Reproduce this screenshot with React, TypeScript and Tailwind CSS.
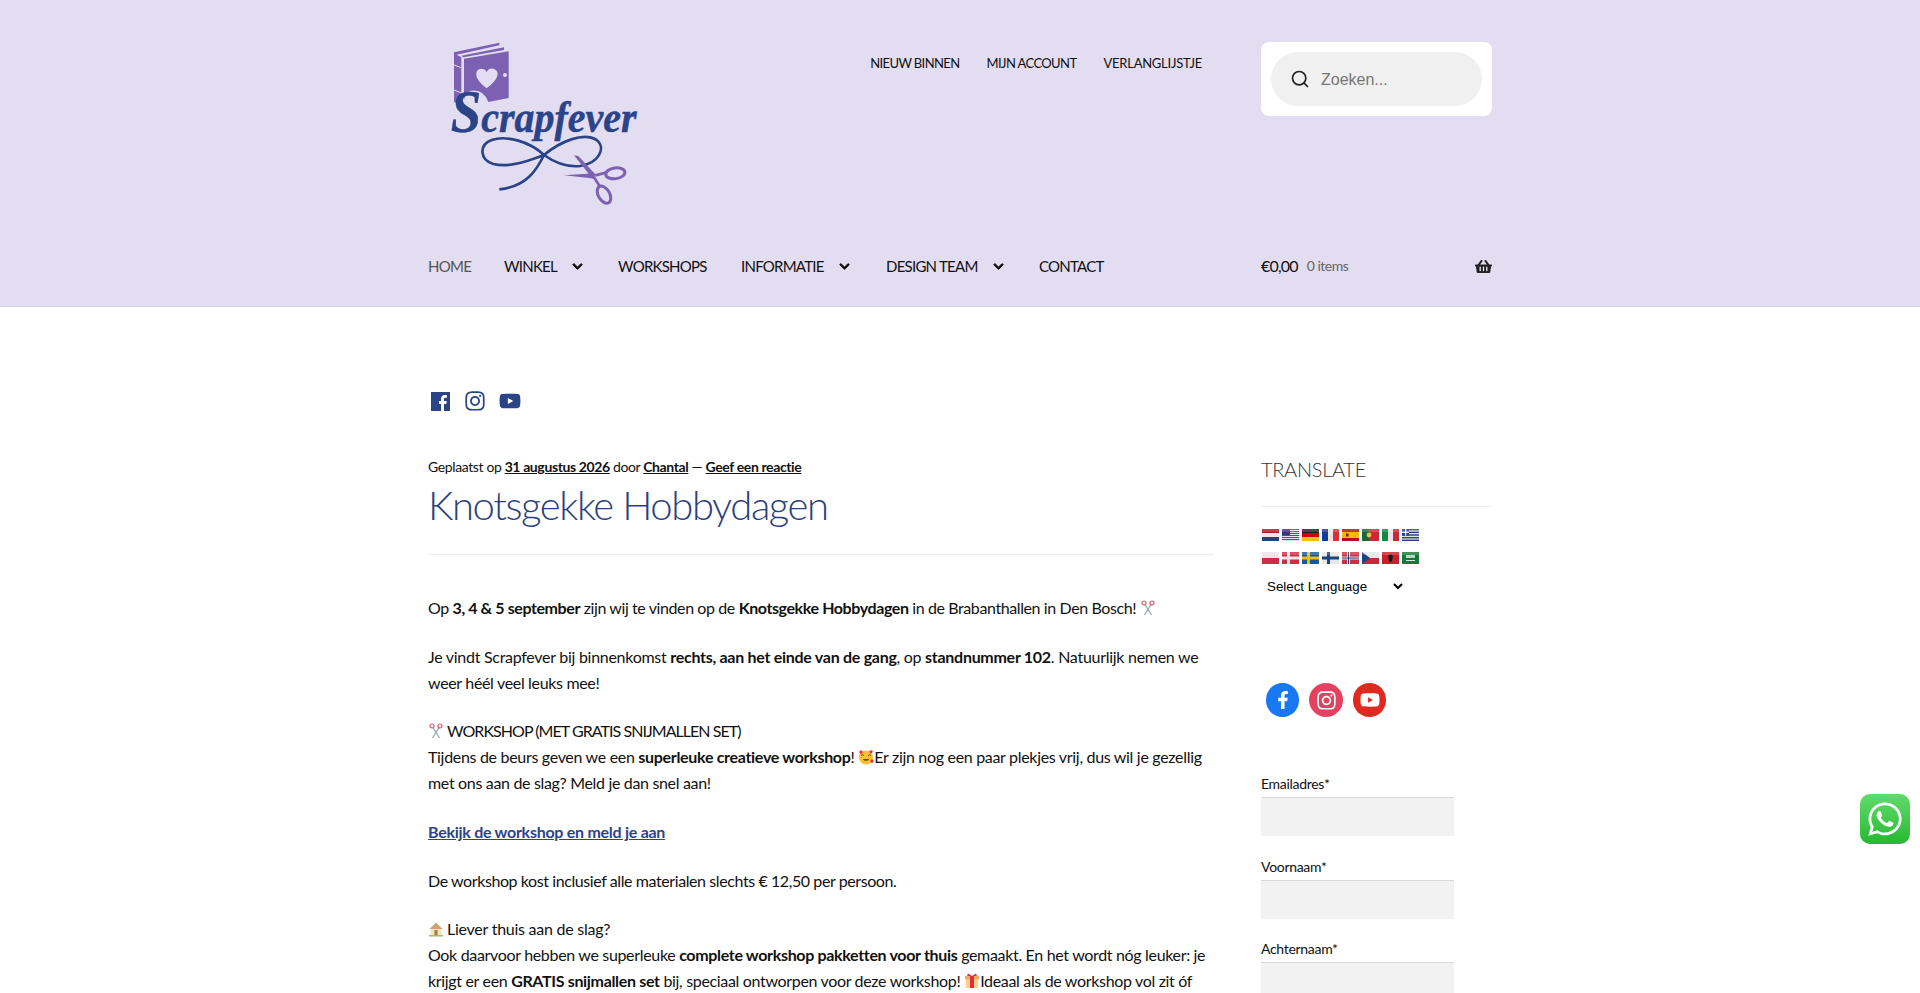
import React from "react";
import { FaFacebookF, FaInstagram, FaYoutube, FaWhatsapp, FaChevronDown, FaShoppingBasket } from "react-icons/fa";
import { Search } from "lucide-react";

const Scissors = () => (
  <svg viewBox="0 0 16 16" className="inline-block w-4 h-4 align-[-2px] mr-[3px]">
    <path d="M5 4.5 L11.5 15 M11 4.5 L4.5 15" stroke="#99aab5" strokeWidth="1.4" fill="none" />
    <circle cx="4" cy="3" r="2" fill="none" stroke="#dd5566" strokeWidth="1.2" />
    <circle cx="12" cy="3" r="2" fill="none" stroke="#dd5566" strokeWidth="1.2" />
  </svg>
);
const House = () => (
  <svg viewBox="0 0 16 16" className="inline-block w-4 h-4 align-[-2px] mr-[3px]">
    <rect x="3" y="7" width="10" height="7" fill="#f3e3b0" />
    <path d="M1.5 8 L8 1.5 L14.5 8 Z" fill="#c9a670" />
    <rect x="6.5" y="9" width="3" height="5" fill="#9b7b52" />
    <rect x="1" y="14" width="14" height="1.5" fill="#8fc46a" />
  </svg>
);
const Gift = () => (
  <svg viewBox="0 0 16 16" className="inline-block w-4 h-4 align-[-2px]">
    <rect x="2" y="6" width="12" height="9" rx="1" fill="#fbd27e" />
    <rect x="1" y="3" width="14" height="3.5" fill="#f3a85c" />
    <rect x="6" y="3" width="4" height="12" fill="#dd2e44" />
    <path d="M8 3 L4 0.5 L3 3 Z M8 3 L12 0.5 L13 3 Z" fill="#dd2e44" />
  </svg>
);
const Face = () => (
  <svg viewBox="0 0 16 16" className="inline-block w-4 h-4 align-[-2px]">
    <circle cx="8" cy="8.5" r="7" fill="#fbc02d" />
    <path d="M4.5 10 Q8 14 11.5 10 Z" fill="#7a4a20" />
    <path d="M3 6.5 Q4.5 5 6 6.5 M10 6.5 Q11.5 5 13 6.5" stroke="#7a4a20" strokeWidth="1" fill="none" />
    <path d="M1 3 L3 1 L5 3 L3 5.5 Z M12 12 L14 10 L16 12 L14 14.5 Z M11 2.5 L13 1 L15 2.5 L13 5 Z" fill="#e8353f" />
  </svg>
);

const Flag = ({ children }: { children: React.ReactNode }) => (
  <svg viewBox="0 0 17 12" className="w-[17px] h-[12px] block">
    {children}
    <rect width="17" height="12" fill="#000" opacity="0.05" />
    <rect width="17" height="3" fill="#fff" opacity="0.18" />
  </svg>
);
const H = (a: string, b: string, c: string) => (
  <>
    <rect width="17" height="4" fill={a} />
    <rect y="4" width="17" height="4" fill={b} />
    <rect y="8" width="17" height="4" fill={c} />
  </>
);
const V = (a: string, b: string, c: string) => (
  <>
    <rect width="6" height="12" fill={a} />
    <rect x="6" width="5" height="12" fill={b} />
    <rect x="11" width="6" height="12" fill={c} />
  </>
);
const Nordic = (bg: string, c: string, inner?: string) => (
  <>
    <rect width="17" height="12" fill={bg} />
    <rect x="5" width="3" height="12" fill={c} />
    <rect y="4.5" width="17" height="3" fill={c} />
    {inner && <rect x="6" width="1" height="12" fill={inner} />}
    {inner && <rect y="5.5" width="17" height="1" fill={inner} />}
  </>
);
const row1 = [
  H("#ae1c28", "#f4f4f4", "#21468b"),
  <>
    <rect width="17" height="12" fill="#f2f2f2" />
    {[0, 2, 4, 6, 8, 10].map((y) => <rect key={y} y={y} width="17" height="1" fill="#c8283c" />)}
    <rect width="8" height="6" fill="#3c3b6e" />
  </>,
  H("#222", "#d00", "#ffce00"),
  V("#1c3f94", "#f4f4f4", "#e1343f"),
  <>
    <rect width="17" height="12" fill="#c60b1e" />
    <rect y="3" width="17" height="6" fill="#ffc400" />
    <rect x="4" y="4.5" width="2.5" height="3" fill="#ad1519" />
  </>,
  <>
    <rect width="7" height="12" fill="#1f6b3a" />
    <rect x="7" width="10" height="12" fill="#d92b3a" />
    <circle cx="7" cy="6" r="2.4" fill="#f4d03f" />
  </>,
  V("#1a8f4a", "#f4f4f4", "#d62b38"),
  <>
    <rect width="17" height="12" fill="#f2f2f2" />
    {[0, 2.6, 5.3, 8, 10.6].map((y) => <rect key={y} y={y} width="17" height="1.4" fill="#2d3f93" />)}
    <rect width="7" height="6.5" fill="#2d3f93" />
    <rect x="3" width="1.3" height="6.5" fill="#fff" />
    <rect y="2.6" width="7" height="1.3" fill="#fff" />
  </>,
];
const row2 = [
  <>
    <rect width="17" height="6" fill="#f4f4f4" />
    <rect y="6" width="17" height="6" fill="#d9304a" />
  </>,
  Nordic("#d8324a", "#f4f4f4"),
  Nordic("#1b5f9e", "#fcc917"),
  Nordic("#f4f4f4", "#1d4a86"),
  Nordic("#d8324a", "#f4f4f4", "#22407f"),
  <>
    <rect width="17" height="6" fill="#f4f4f4" />
    <rect y="6" width="17" height="6" fill="#d7263d" />
    <path d="M0 0 L8 6 L0 12 Z" fill="#1d4a86" />
  </>,
  <>
    <rect width="17" height="12" fill="#d3222e" />
    <path d="M8.5 2 L11 4 L10 9 L8.5 10.5 L7 9 L6 4 Z" fill="#1b1b1b" />
  </>,
  <>
    <rect width="17" height="12" fill="#16813f" />
    <rect x="4" y="3" width="9" height="3" fill="#bfe3c8" />
    <rect x="4" y="8" width="9" height="1" fill="#e6f3e9" />
  </>,
];

const Logo = () => (
  <svg viewBox="0 0 780 600" className="w-[260px] h-[200px] block">
    <g fill="#7c61b2">
      <path d="M102 97 L238 68 L238 76 L110 104 L124 112 L124 255 L102 246 Z" />
      <path d="M132 116 L266 94 L266 234 L205 246 Q190 205 150 213 Q135 220 132 240 Z" />
      <path d="M124 107 L252 82 L252 90 L130 112 Z" />
    </g>
    <path d="M200 205 C175 185 165 170 170 155 C176 143 193 143 200 156 C207 141 226 143 232 156 C236 172 222 188 200 205 Z" fill="#e2ddf1" />
    <circle cx="255" cy="165" r="6" fill="#e2ddf1" />
    <path d="M102 135 L124 143 M102 210 L124 219" stroke="#e2ddf1" strokeWidth="3" />
    <text x="92" y="335" fill="#2b4488" stroke="#2b4488" strokeWidth="1.5" fontFamily="'Liberation Serif', serif" fontStyle="italic" fontWeight="700" fontSize="135" textLength="558" lengthAdjust="spacingAndGlyphs">
      <tspan fontSize="185">S</tspan>crapfever
    </text>
    <path d="M238 508 C320 500 350 450 372 405 C330 365 260 345 215 360 C175 375 180 420 220 432 C270 445 330 420 372 405 C420 365 490 335 530 360 C560 385 535 430 480 438 C440 442 400 425 372 405" fill="none" stroke="#2b4488" strokeWidth="8" />
    <g fill="#7c61b2">
      <path d="M462 406 L475 408 L528 465 L518 476 Z" />
      <path d="M432 466 L522 460 L526 476 Z" />
    </g>
    <ellipse cx="586" cy="460" rx="29" ry="16" fill="none" stroke="#7c61b2" strokeWidth="9" transform="rotate(-8 586 460)" />
    <ellipse cx="552" cy="524" rx="17" ry="28" fill="none" stroke="#7c61b2" strokeWidth="9" transform="rotate(-30 552 524)" />
    <path d="M526 466 L558 458 M522 472 L540 500" stroke="#7c61b2" strokeWidth="8" />
  </svg>
);

const NavItem = ({ label, chevron, className }: { label: string; chevron?: boolean; className?: string }) => (
  <a className={`flex items-center text-[15px] tracking-[-0.75px] text-[#111] ${className ?? ""}`}>
    {label}
    {chevron && <FaChevronDown className="text-[11px] ml-[15px] stroke-current stroke-[40]" />}
  </a>
);

const Field = ({ label, cut }: { label: string; cut?: boolean }) => (
  <div className="mb-[18.5px]">
    <div className="text-[14px] leading-[23px] mb-[2px] tracking-[-0.3px] text-[#111]">{label}</div>
    <div className={`w-[193px] ${cut ? "h-[60px]" : "h-[39px]"} bg-[#f2f2f2] border-t border-[#d8d8d8]`} />
  </div>
);

const FacebookSquare = () => (
  <svg viewBox="0 0 19 19" className="w-[19px] h-[19px]" fill="currentColor">
    <path d="M0 0h19v19h-6v-7h2.4l.4-3H13V7.2c0-.9.3-1.4 1.4-1.4h1.5V3.1c-.3 0-1.1-.1-2.1-.1-2.2 0-3.7 1.3-3.7 3.8V9H8v3h2.1v7H0z" />
  </svg>
);

export default function App() {
  return (
    <div className="h-[993px] overflow-hidden relative bg-white font-['Lato','Noto_Sans',sans-serif] text-[16px] text-[#111]">
      <header className="h-[307px] bg-[#e2ddf1] border-b border-[#d3cfdf]">
        <div className="w-[1064px] mx-auto">
          <div className="flex h-[216px]">
            <div className="w-[433px] -ml-2 pt-[20px]"><Logo /></div>
            <div className="w-[394px] flex justify-end pt-[54px] pr-[45px] gap-[27px] text-[13px] leading-[18px] tracking-[-0.6px] text-[#111] whitespace-nowrap">
              <a>NIEUW BINNEN</a>
              <a>MIJN ACCOUNT</a>
              <a className="tracking-[-0.25px]">VERLANGLIJSTJE</a>
            </div>
            <div className="ml-auto pt-[42px]">
              <div className="w-[231px] h-[74px] bg-white rounded-lg p-[10px]">
                <div className="h-[54px] bg-[#f0f0f0] rounded-[27px] flex items-center pl-[19px]">
                  <Search size={20} strokeWidth={2} className="text-[#222]" />
                  <span className="ml-[11px] mt-[1px] font-['Liberation_Sans',sans-serif] text-[#757575] text-[16px]">Zoeken...</span>
                </div>
              </div>
            </div>
          </div>
          <div className="flex items-center h-[20px] mt-[40px] leading-[20px] whitespace-nowrap">
            <NavItem label="HOME" className="!text-[#555] w-[76px]" />
            <NavItem label="WINKEL" chevron className="w-[114px]" />
            <NavItem label="WORKSHOPS" className="w-[123px]" />
            <NavItem label="INFORMATIE" chevron className="w-[145px]" />
            <NavItem label="DESIGN TEAM" chevron className="w-[153px]" />
            <NavItem label="CONTACT" className="w-[222px]" />
            <div className="w-[231px] flex items-center">
              <span className="tracking-[-0.8px]">€0,00</span>
              <span className="ml-[9px] text-[14px] text-[#666] tracking-[-0.5px]">0 items</span>
              <FaShoppingBasket className="ml-auto text-[17px] text-[#222]" />
            </div>
          </div>
        </div>
      </header>

      <main className="w-[1064px] mx-auto">
        <div className="flex items-center gap-[15px] pt-[84px] pl-[3px] h-[104px] text-[#2b4488]">
          <FacebookSquare />
          <FaInstagram className="text-[22px] -ml-[1px]" />
          <FaYoutube className="text-[22px] -ml-[2px]" />
        </div>
        <div className="flex justify-between pt-[45px]">
          <article className="w-[786px]">
            <div className="text-[14px] leading-[21px] tracking-[-0.38px] whitespace-nowrap">
              Geplaatst op <a className="font-bold underline">31 augustus 2026</a> door <a className="font-bold underline">Chantal</a> — <a className="font-bold underline">Geef een reactie</a>
            </div>
            <h1 className="text-[40px] leading-[52px] mt-[2px] font-light text-[#2b3f80] tracking-[-1.4px] whitespace-nowrap">Knotsgekke Hobbydagen</h1>
            <div className="border-t border-[#eeeeee] mt-[23px] mb-[40px]" />
            <div className="leading-[25.9px] tracking-[-0.33px] whitespace-nowrap">
              <p className="mb-[22.8px] tracking-[-0.4px]">Op <b>3, 4 &amp; 5 september</b> zijn wij te vinden op de <b>Knotsgekke Hobbydagen</b> in de Brabanthallen in Den Bosch! <Scissors /></p>
              <p className="mb-[22.8px]"><span className="tracking-[-0.28px]">Je vindt Scrapfever bij binnenkomst <b>rechts, aan het einde van de gang</b>, op <b>standnummer 102</b>. Natuurlijk nemen we</span><br />weer héél veel leuks mee!</p>
              <p className="mb-[22.8px]"><Scissors /><span className="tracking-[-0.95px]">WORKSHOP (MET GRATIS SNIJMALLEN SET)</span><br /><span className="tracking-[-0.31px]">Tijdens de beurs geven we een <b>superleuke creatieve workshop</b>! <Face />Er zijn nog een paar plekjes vrij, dus wil je gezellig</span><br />met ons aan de slag? Meld je dan snel aan!</p>
              <p className="mb-[22.8px]"><a className="font-bold underline text-[#2b4488] tracking-[-0.27px]">Bekijk de workshop en meld je aan</a></p>
              <p className="mb-[22.8px] tracking-[-0.41px]">De workshop kost inclusief alle materialen slechts € 12,50 per persoon.</p>
              <p><House /><span className="tracking-[-0.25px]">Liever thuis aan de slag?</span><br />Ook daarvoor hebben we superleuke <b>complete workshop pakketten voor thuis</b> gemaakt. En het wordt nóg leuker: je<br />krijgt er een <b>GRATIS snijmallen set</b> bij, speciaal ontworpen voor deze workshop! <Gift />Ideaal als de workshop vol zit óf</p>
            </div>
          </article>
          <aside className="w-[231px]">
            <h2 className="text-[20px] leading-[30px] font-light text-[#333] tracking-[-0.3px] mt-[-2px]">TRANSLATE</h2>
            <div className="border-t border-[#eeeeee] mt-[22px]" />
            <div className="pl-[1px] pt-[22px] flex flex-col gap-[11px]">
              {[row1, row2].map((r, i) => (
                <div key={i} className="flex gap-[3px]">
                  {r.map((f, j) => <Flag key={j}>{f}</Flag>)}
                </div>
              ))}
            </div>
            <select className="block mt-[10px] w-[145px] h-[25px] pl-[2px] bg-white text-[13.33px] text-black font-['Liberation_Sans',sans-serif]">
              <option>Select Language</option>
            </select>
            <div className="flex gap-[10px] pl-[5px] mt-[84px]">
              <a className="w-[33px] h-[34px] rounded-full bg-[#1778f2] flex items-center justify-center text-white text-[18px]"><FaFacebookF /></a>
              <a className="w-[34px] h-[34px] rounded-full bg-[#e4405f] flex items-center justify-center text-white text-[21px]"><FaInstagram /></a>
              <a className="w-[33px] h-[34px] rounded-full bg-[#e02a20] flex items-center justify-center text-white text-[20px]"><FaYoutube /></a>
            </div>
            <div className="mt-[55px]">
              <Field label="Emailadres*" />
              <Field label="Voornaam*" />
              <Field label="Achternaam*" cut />
            </div>
          </aside>
        </div>
      </main>

      <div className="absolute left-[1860px] top-[794px] w-[50px] h-[50px] rounded-[10px] bg-gradient-to-b from-[#5fdc6a] to-[#22b92f] flex items-center justify-center text-white text-[38px]">
        <FaWhatsapp />
      </div>
    </div>
  );
}
